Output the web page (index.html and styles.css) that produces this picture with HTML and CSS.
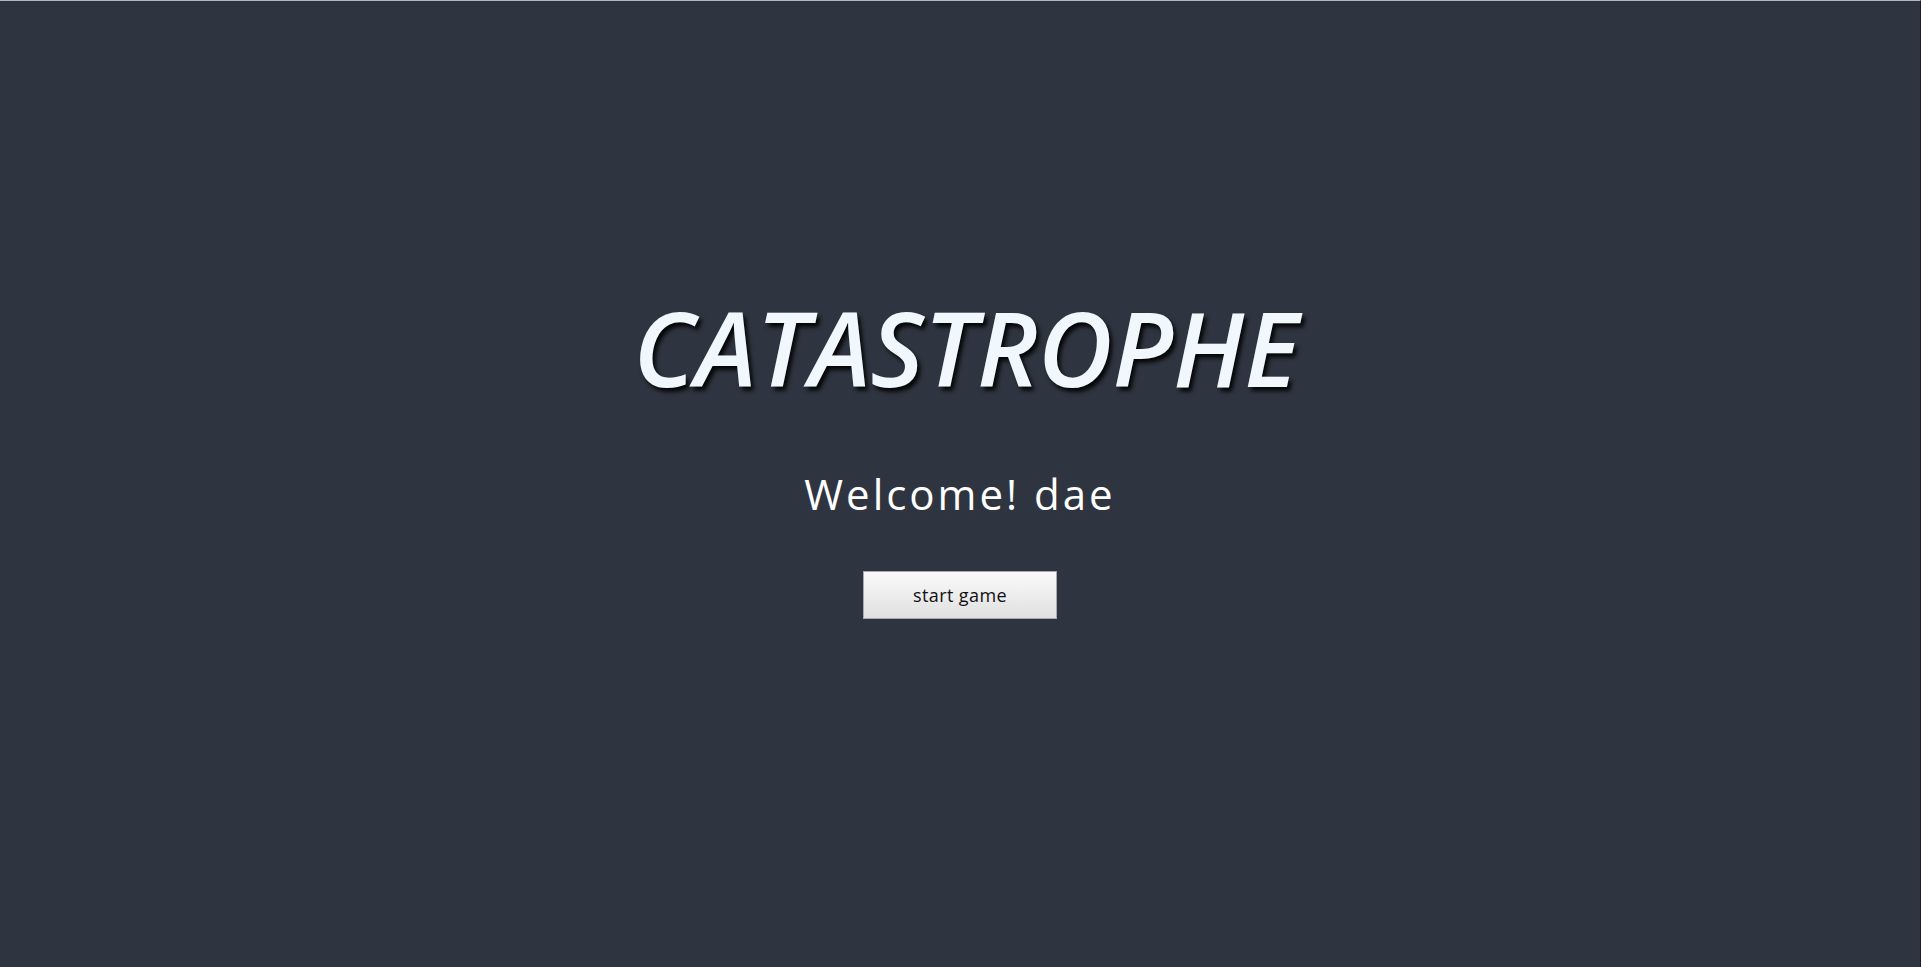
FILE: index.html
```html
<!DOCTYPE html>
<html lang="en">
<head>
<meta charset="utf-8">
<title>Catastrophe</title>
<link rel="stylesheet" href="styles.css">
</head>
<body>
<main class="screen">
  <section class="intro">
    <h1 class="title">CATASTROPHE</h1>
    <p class="welcome">Welcome! dae</p>
    <button class="start-btn" type="button">start game</button>
  </section>
</main>
</body>
</html>
```
FILE: styles.css
```css
html, body {
  margin: 0;
  padding: 0;
  height: 100%;
}
body {
  background: #2f3540;
  font-family: "Open Sans", "Noto Sans", sans-serif;
  box-sizing: border-box;
  border-top: 1px solid #b3b6bb;
  border-right: 1px solid #1b1e24;
}
.screen {
  height: 100%;
  display: flex;
  justify-content: center;
}
.intro {
  display: flex;
  flex-direction: column;
  align-items: center;
  padding-top: 286px;
}
.title {
  margin: 0;
  font-size: 103px;
  font-style: italic;
  font-weight: 600;
  line-height: 120px;
  color: #f0f7fd;
  letter-spacing: 0;
  text-shadow: 3px 4px 4px rgba(0, 0, 0, 0.9);
  transform: translateX(6px);
}
.welcome {
  margin: 62px 0 0 0;
  font-size: 42px;
  line-height: 50px;
  letter-spacing: 3px;
  color: #ffffff;
}
.start-btn {
  margin-top: 52px;
  width: 194px;
  height: 48px;
  border: 1px solid #a7a9ad;
  border-radius: 0;
  background: linear-gradient(#fafafa, #e0e0e0);
  font-family: "Open Sans", "Noto Sans", sans-serif;
  font-size: 18px;
  letter-spacing: 0.4px;
  color: #111;
  padding: 0;
}
```
